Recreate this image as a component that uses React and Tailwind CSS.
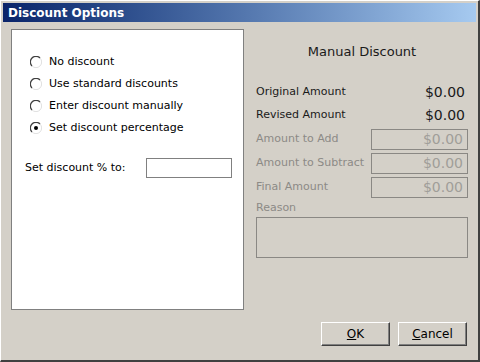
import React from "react";

function Radio({ checked }) {
  return (
    <svg width="12" height="12" viewBox="0 0 12 12" className="shrink-0">
      <circle cx="6" cy="6" r="5.5" fill="#fff" />
      <path d="M10 2 A5.5 5.5 0 0 0 2 10" fill="none" stroke="#404040" strokeWidth="1.3" />
      <path d="M2 10 A5.5 5.5 0 0 0 10 2" fill="none" stroke="#e0e0e0" strokeWidth="1" />
      {checked && <circle cx="6" cy="6" r="2" fill="#000" />}
    </svg>
  );
}

const options = [
  "No discount",
  "Use standard discounts",
  "Enter discount manually",
  "Set discount percentage",
];

function FieldRow({ label }) {
  return (
    <div className="flex items-center h-[21px]">
      <span className="w-[115px] text-[#8c8a86]">{label}</span>
      <div className="ml-auto w-[97px] h-[21px] border border-[#8a8884] flex items-center justify-end pr-[4px] text-[14px] text-[#a09e99]">
        $0.00
      </div>
    </div>
  );
}

export default function App() {
  return (
    <div
      className="w-[480px] h-[362px] bg-[#d4d0c8] border-t border-l border-t-white border-l-white border-r-[2px] border-b-[2px] border-r-[#404040] border-b-[#404040] flex flex-col text-[11px] text-black"
      style={{ fontFamily: "'DejaVu Sans', Tahoma, sans-serif" }}
    >
      <div className="mt-[2px] mx-[2px] h-[19px] bg-gradient-to-r from-[#0a246a] to-[#a6caf0] flex items-center pl-[5px]">
        <span className="text-white font-bold text-[12px]">Discount Options</span>
      </div>

      <div className="flex flex-1 pt-[7px] pl-[10px] pr-[10px]">
        <div className="w-[234px] h-[281px] bg-white border border-[#808080] pt-[26px]">
          <div className="flex flex-col gap-[10px] pl-[18px]">
            {options.map((o, i) => (
              <label key={o} className="flex items-center gap-[7px] h-[12px]">
                <Radio checked={i === 3} />
                <span>{o}</span>
              </label>
            ))}
          </div>
          <div className="flex items-center h-[20px] mt-[24px] pl-[13px]">
            <span>Set discount % to:</span>
            <div className="ml-auto mr-[11px] w-[86px] h-[20px] border border-[#808080] bg-white" />
          </div>
        </div>

        <div className="flex-1 pl-[12px]">
          <div className="h-[16px] leading-[16px] text-center text-[13px] mt-[15px] text-[#1a1a1a]">Manual Discount</div>
          <div className="h-[16px] mt-[24px] flex items-center text-[#1a1a1a]">
            <span>Original Amount</span>
            <span className="ml-auto text-[14px] mr-[3px]">$0.00</span>
          </div>
          <div className="h-[16px] mt-[7px] flex items-center text-[#1a1a1a]">
            <span>Revised Amount</span>
            <span className="ml-auto text-[14px] mr-[3px]">$0.00</span>
          </div>
          <div className="mt-[6px] flex flex-col gap-[3px]">
            <FieldRow label="Amount to Add" />
            <FieldRow label="Amount to Subtract" />
            <FieldRow label="Final Amount" />
          </div>
          <div className="h-[14px] leading-[14px] mt-[3px] text-[#8c8a86]">Reason</div>
          <div className="mt-[2px] h-[41px] border border-[#8a8884]" />
        </div>
      </div>

      <div className="flex justify-end gap-[8px] pr-[11px] pb-[14px]">
        <button className="w-[69px] h-[24px] bg-[#d4d0c8] border border-t-white border-l-white border-r-[#404040] border-b-[#404040] shadow-[inset_-1px_-1px_0_#808080] text-[12px]">
          <span className="underline">O</span>K
        </button>
        <button className="w-[69px] h-[24px] bg-[#d4d0c8] border border-t-white border-l-white border-r-[#404040] border-b-[#404040] shadow-[inset_-1px_-1px_0_#808080] text-[12px]">
          <span className="underline">C</span>ancel
        </button>
      </div>
    </div>
  );
}
